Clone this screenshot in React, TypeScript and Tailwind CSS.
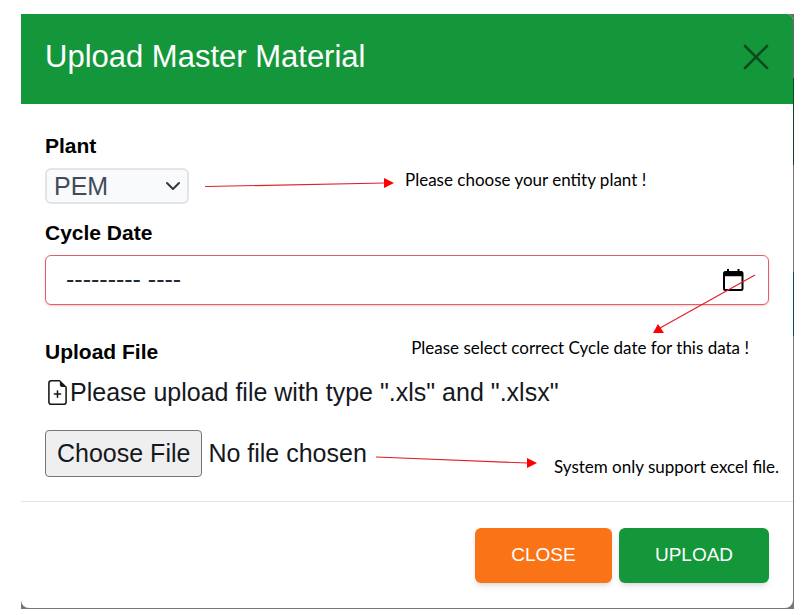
import React from "react";

function Note({ children }: { children: React.ReactNode }) {
  return (
    <p className="whitespace-nowrap font-[Lato,sans-serif] text-[17px] leading-6 text-black">
      {children}
    </p>
  );
}

function FieldLabel({ htmlFor, children }: { htmlFor: string; children: React.ReactNode }) {
  return (
    <label htmlFor={htmlFor} className="block text-[21px] leading-9 font-bold text-black">
      {children}
    </label>
  );
}

export default function App() {
  return (
    <div className="min-h-screen bg-white pt-[14px] pr-[17px] pl-[21px] font-['Liberation_Sans',Arial,sans-serif]">
      <div className="bg-[linear-gradient(#6b6b6b_64px,#0b4a20_64px,#0b4a20_151px,#77777b_151px,#77777b_258px,#0d4a5c_258px,#0d4a5c_322px,#77777b_322px)] pr-px pb-px">
        <section
          role="dialog"
          aria-labelledby="dialog-title"
          className="overflow-hidden rounded-tr-md rounded-b-lg bg-white"
        >
          <header className="flex h-[90px] items-center justify-between bg-[#14973a] px-6 pb-1">
            <h1 id="dialog-title" className="text-[31px] leading-10 text-white">
              Upload Master Material
            </h1>
            <button type="button" aria-label="Close dialog" className="text-[#0a4b1d]">
              <svg width="26" height="26" viewBox="0 0 26 26" fill="none" stroke="currentColor" strokeWidth="2.6" strokeLinecap="round">
                <path d="M2 2 24 24M24 2 2 24" />
              </svg>
            </button>
          </header>

          <form className="px-6 pt-6 pb-6">
            <FieldLabel htmlFor="plant">Plant</FieldLabel>
            <div className="mt-1 flex items-center">
              <div className="relative w-36">
                <select
                  id="plant"
                  defaultValue="PEM"
                  className="block h-9 w-full appearance-none rounded-md border-2 border-[#e2e4e9] bg-[#f8fafc] pr-8 pl-[7px] text-[25px] leading-8 text-[#414b5a]"
                >
                  <option>PEM</option>
                </select>
                <svg className="pointer-events-none absolute top-3 right-2" width="16" height="12" viewBox="0 0 16 12" fill="none" stroke="#343a40" strokeWidth="2" strokeLinecap="round" strokeLinejoin="round">
                  <path d="M2 3 8 9 14 3" />
                </svg>
              </div>
              <svg className="mb-0.5 ml-4 shrink-0" width="190" height="14" viewBox="0 0 190 14" aria-hidden="true">
                <path d="M0 8.500 180 5" stroke="#e0202a" strokeWidth="1.200" />
                <path d="M179 0v10l10-5z" fill="#f00" />
              </svg>
              <div className="ml-[10px] pb-3">
                <Note>Please choose your entity plant !</Note>
              </div>
            </div>

            <div className="mt-[11px]">
              <FieldLabel htmlFor="cycle-date">Cycle Date</FieldLabel>
            </div>
            <div className="relative mt-1">
              <div className="flex h-[50px] items-center rounded-md border border-[#e0606a] bg-white px-5 shadow-xs shadow-red-200">
                <input
                  id="cycle-date"
                  type="text"
                  placeholder="--------- ----"
                  className="min-w-0 flex-1 bg-transparent text-[25px] text-[#212b36] outline-none placeholder:text-[#212b36]"
                />
                <button type="button" aria-label="Open calendar" className="mr-1 text-black">
                  <svg width="21" height="22" viewBox="0 0 21 22" fill="none" stroke="currentColor">
                    <rect x="1" y="3" width="18.500" height="18" rx="1.500" strokeWidth="2" />
                    <path d="M1 5h18.500" strokeWidth="4.500" />
                    <path d="M5 0v4M15.500 0v4" strokeWidth="2" />
                  </svg>
                </button>
              </div>
              <svg className="pointer-events-none absolute top-[19px] right-[13px]" width="104" height="60" viewBox="0 0 104 60" aria-hidden="true">
                <path d="M103 1 8 54" stroke="#e0202a" strokeWidth="1.200" />
                <path d="M1 59 6 50 12 59z" fill="#f00" />
              </svg>
            </div>

            <div className="mt-[29px] flex justify-between pr-5">
              <FieldLabel htmlFor="file">Upload File</FieldLabel>
              <div className="pt-0.5">
                <Note>Please select correct Cycle date for this data !</Note>
              </div>
            </div>
            <p className="mt-1 flex items-center text-[25px] leading-9 text-[#15181c]">
              <svg className="shrink-0" width="25" height="25" viewBox="0 0 16 16" fill="currentColor" aria-hidden="true">
                <path d="M8 6.500a.5.5 0 0 1 .5.5v1.500H10a.5.5 0 0 1 0 1H8.500V11a.5.5 0 0 1-1 0V9.500H6a.5.5 0 0 1 0-1h1.500V7a.5.5 0 0 1 .5-.5" />
                <path d="M14 4.500V14a2 2 0 0 1-2 2H4a2 2 0 0 1-2-2V2a2 2 0 0 1 2-2h5.500zm-3 0A1.500 1.500 0 0 1 9.500 3V1H4a1 1 0 0 0-1 1v12a1 1 0 0 0 1 1h8a1 1 0 0 0 1-1V4.500z" />
              </svg>
              Please upload file with type ".xls" and ".xlsx"
            </p>
            <div className="mt-5 flex items-center">
              <input
                id="file"
                type="file"
                accept=".xls,.xlsx"
                className="h-[47px] w-[330px] shrink-0 text-[25px] text-[#15181c] file:mr-1.5 file:h-[47px] file:rounded-sm file:border file:border-solid file:border-[#767676] file:bg-[#efefef] file:px-[11px]"
              />
              <svg className="mt-4 shrink-0" width="163" height="14" viewBox="0 0 163 14" aria-hidden="true">
                <path d="M1 2 152 8" stroke="#e0202a" strokeWidth="1.200" />
                <path d="M152 3v10l10-5z" fill="#f00" />
              </svg>
              <div className="-mb-0.5 ml-4 self-end">
                <Note>System only support excel file.</Note>
              </div>
            </div>
          </form>

          <footer className="flex justify-end gap-[7px] border-t border-[#e3e5e8] px-6 pt-[26px] pb-[25px]">
            <button type="button" className="h-[55px] w-[137px] rounded-md bg-[#fa7417] text-[19px] text-white shadow-md">
              CLOSE
            </button>
            <button type="submit" className="h-[55px] w-[150px] rounded-md bg-[#14973a] text-[19px] text-white shadow-md">
              UPLOAD
            </button>
          </footer>
        </section>
      </div>
    </div>
  );
}
